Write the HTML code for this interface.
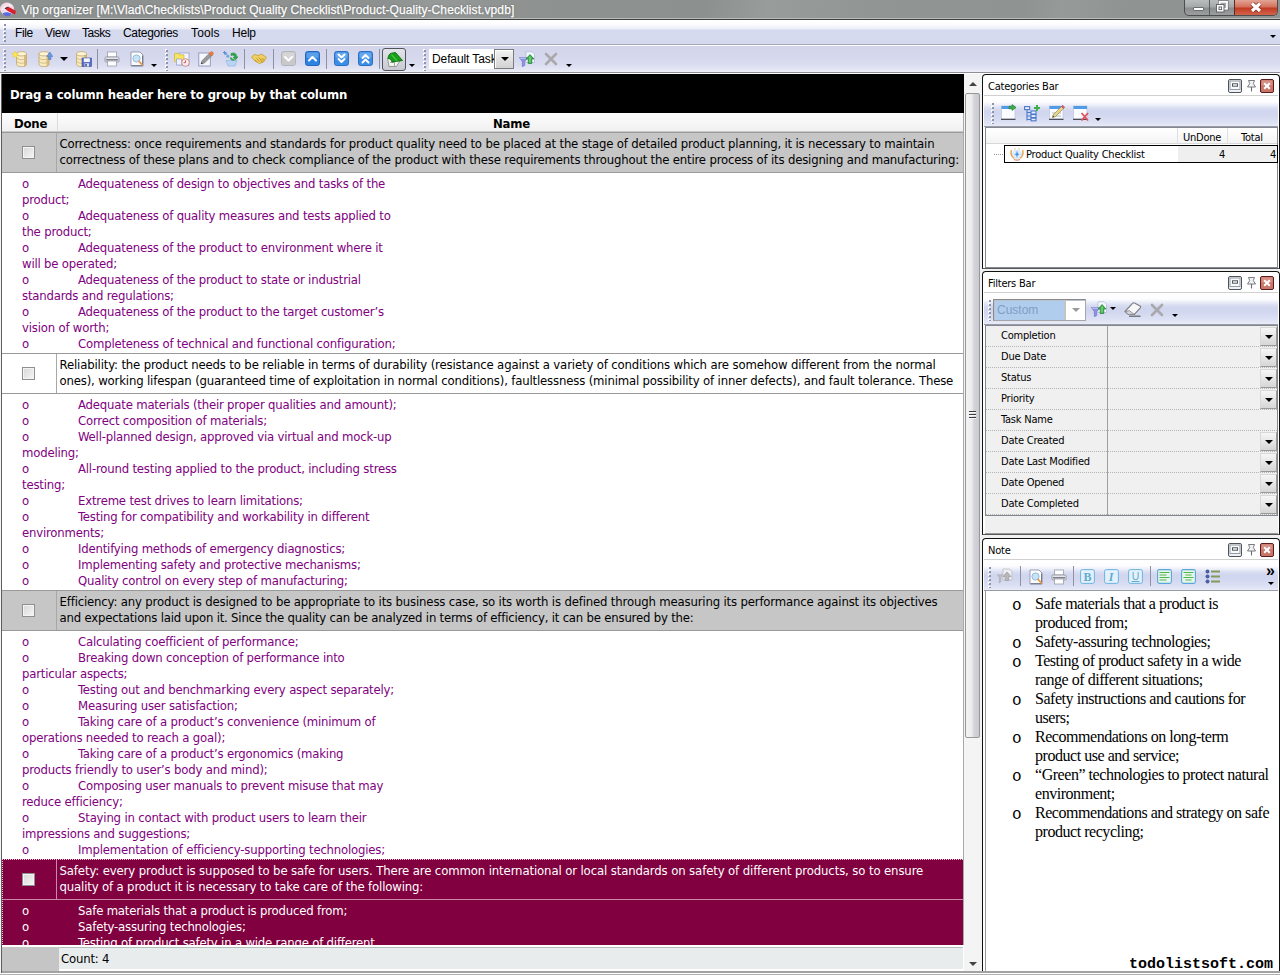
<!DOCTYPE html>
<html lang="en">
<head>
<meta charset="utf-8">
<title>Vip organizer</title>
<style>
*{box-sizing:border-box;margin:0;padding:0}
html,body{width:1280px;height:975px;overflow:hidden;background:#d6daee}
body{position:relative;font-family:"Liberation Sans",sans-serif;font-size:12px;color:#000}
.abs{position:absolute}
.t{position:absolute;white-space:pre;line-height:16px}
/* title bar */
#title{left:0;top:0;width:1280px;height:18px;background:linear-gradient(100deg,#8d9291 0%,#8d9291 30%,#969b9a 34%,#8e9392 40%,#8c9190 55%,#989d9c 60%,#919695 68%,#8f9493 80%,#969b9a 83%,#8f9493 88%)}
#title .t{left:21.500px;top:2px;-webkit-text-stroke:0.25px #fff;color:#fff;font-size:12px;line-height:16px;letter-spacing:0.09px;text-shadow:0 0 2px #555}
#tline{left:0;top:18px;width:1280px;height:2px;background:linear-gradient(#b8bcbb 0,#b8bcbb 1px,#3e4040 1px)}
/* menu */
#menu{left:0;top:20px;width:1280px;height:25px;background:linear-gradient(#ffffff 0,#fdfdff 4px,#f3f4fb 7px,#eaedf8 9px,#d5daee 10px,#d4d9ee 24px);border-bottom:1px solid #a3a7be}
#menu .t{top:5px;font-size:12px}
#tool{left:0;top:45px;width:1280px;height:29px;background:linear-gradient(#ffffff 0,#ffffff 1px,#d3d5ea 1px,#d5d8ed 12px,#dbdef1 20px,#e6e8f5 25px,#eef0f8 27px,#8e8e96 27px,#8e8e96 28px,#fff 28px)}
/* grid */
#grid{left:2px;top:74px;width:962px;height:899px;background:#fff;font-family:"DejaVu Sans Condensed","DejaVu Sans",sans-serif;font-size:13px;letter-spacing:-0.19px;overflow:hidden}
#grp{left:0;top:0;width:962px;height:39px;background:#000}
#grp .t{left:8px;top:13px;color:#fff;font-weight:bold;letter-spacing:-0.14px}
#hdr{left:0;top:39px;width:962px;height:19px;background:linear-gradient(#fdfdfd,#f1f1f1);border-bottom:1px solid #c9c9c9}
#hdr .t{top:3px;font-weight:bold}
.row{position:absolute;left:0;width:962px;height:41px;box-shadow:inset 0 1px 0 #9a9a9a,inset 0 -1px 0 #9a9a9a}
.row .c1{position:absolute;left:0;top:1px;width:55px;height:39px;border-right:1px solid #a8a8a8}
.row .t{left:57.500px;top:4px}
.cb{position:absolute;left:20px;top:13px;width:13px;height:13px;border:1px solid #8e8f8f;background:linear-gradient(135deg,#d8d8d8,#f6f6f6);box-shadow:inset 0 0 0 1px #f4f4f4}
.pv{position:absolute;left:0;width:962px;color:#800080}
.pv .t{left:20px;top:3px}
.pv i{font-style:normal;display:inline-block;width:56px}

/* scrollbar */
#sb{left:964px;top:74px;width:18px;height:898px;background:#f4f4f4}
#sbt{left:1px;top:19px;width:15px;height:645px;border:1px solid #979797;border-radius:2px;background:linear-gradient(90deg,#f3f3f3 0,#ececee 45%,#d4d4da 60%,#c9c9d1 100%)}
.arr{position:absolute;width:0;height:0;border-left:4px solid transparent;border-right:4px solid transparent}
/* panels */
.panel{border-bottom-color:#5a5a5a !important;position:absolute;left:982px;width:298px;font-family:"DejaVu Sans Condensed","DejaVu Sans",sans-serif;font-size:11px;letter-spacing:-0.22px;background:#fff;border:1px solid #111;border-radius:4px 4px 0 0;overflow:hidden}
.ph{position:absolute;left:1px;top:1px;right:1px;height:20px;border-bottom:1px solid #d0d0d0;background:#fff}
.ph .t{left:4px;top:3px}
.ptb{position:absolute;left:1px;right:1px;top:21px;height:31px;background:linear-gradient(#ffffff 0,#fdfdff 6px,#eceff9 9px,#d9def2 12px,#d1d6ef 15px,#d2d7f0 19px,#dee2f4 27px,#e8ebf7 calc(100% - 1px),#9a9ca8 calc(100% - 1px))}
.pbtn{position:absolute;top:4px;width:14px;height:14px}
.grip{position:absolute;width:3px;background:repeating-linear-gradient(transparent 0,transparent 1px,#9094aa 1px,#9094aa 3px,transparent 3px,transparent 4px) 1px 0/2px 100% no-repeat,repeating-linear-gradient(#fff 0,#fff 2px,transparent 2px,transparent 4px) 0 0/2px 100% no-repeat}
.sep{position:absolute;width:1px;background:#8d91a3}
.ic{position:absolute;width:16px;height:16px}
.dd{position:absolute;width:0;height:0;border-left:3px solid transparent;border-right:3px solid transparent;border-top:3px solid #000}

#fgrid .r{position:absolute;left:0;width:291px;height:21px;border-bottom:1px dotted #b5b5b5}
#fgrid .r .t{left:15px;top:2px}
#fgrid .r b{position:absolute;right:0;top:1px;width:17px;height:19px;border:1px solid #9a9a9a;border-top-color:#d8d8d8;border-left-color:#d8d8d8;background:linear-gradient(#f6f6f6,#d6d6d6)}
#fgrid .r b::after{content:"";position:absolute;left:4px;top:7px;border-left:4px solid transparent;border-right:4px solid transparent;border-top:4px solid #000}
#note{font-family:"Liberation Serif",serif;font-size:16px;letter-spacing:-0.46px}
#note .t{line-height:19px;left:49px;top:3px}
#note .o{position:absolute;left:26px;font-family:"Liberation Mono",monospace;font-size:16px;line-height:19px;letter-spacing:0}
#wm{left:1129px;top:956px;font-family:"Liberation Mono",monospace;font-weight:bold;font-size:15px;letter-spacing:0;line-height:18px}
</style>
</head>
<body>
<div id="title" class="abs"><span class="t">Vip organizer [M:\Vlad\Checklists\Product Quality Checklist\Product-Quality-Checklist.vpdb]</span></div>
<svg class="abs" style="left:0;top:1px" width="17" height="16" viewBox="0 0 17 16"><ellipse cx="7" cy="8" rx="7" ry="6.500" fill="#f3d9e4"/><path d="M1 9c2-4 5-6 9-6l3 2-8 4z" fill="#f8e9f0"/><path d="M5 7.500l3-2 8 4.500-1 3.500-6-2.500z" fill="#d8202c"/><path d="M4.500 7.500l2.500-1.800 1 .8-2.500 1.800z" fill="#3a3a48"/><path d="M2.500 12c3-1.500 6-1.500 9 .5l-2 2.500c-3 .8-5.500 0-7-3z" fill="#5a6ad8"/><path d="M3 11.500c2.500-1 5-1 7.500.2" stroke="#e8e8ff" stroke-width=".8" fill="none"/></svg><div class="abs" id="wb" style="left:1184px;top:0;width:94px;height:16px;border:1px solid #4a4e4e;border-top:0;border-radius:0 0 5px 5px;overflow:hidden;background:linear-gradient(#b9bdbd 0,#a4a8a8 7px,#8a8e8e 8px,#9a9e9e 15px)">
<div class="abs" style="left:49px;top:0;width:44px;height:15px;background:linear-gradient(#e2a595 0,#d4705c 7px,#c23a22 8px,#d2644c 15px);border-left:1px solid #5a2a24"></div>
<div class="abs" style="left:24px;top:0;width:1px;height:15px;background:#5a5e5e"></div>
<div class="abs" style="left:8px;top:7px;width:11px;height:4px;background:#fff;border:1px solid #6a6e6e;border-radius:1px"></div>
<svg class="abs" style="left:29px;top:0" width="16" height="14" viewBox="0 0 16 14"><rect x="5.500" y="1.800" width="7.500" height="7" fill="none" stroke="#5a5e5e" stroke-width="3"/><rect x="5.500" y="1.800" width="7.500" height="7" fill="#a6aaaa" stroke="#fff" stroke-width="1.800"/><rect x="2.500" y="4.500" width="7.500" height="7.500" fill="#fff" stroke="#5a5e5e" stroke-width=".9"/><rect x="5" y="7" width="2.600" height="2.600" fill="#fff" stroke="#5a5e5e" stroke-width=".9"/></svg>
<svg class="abs" style="left:64px;top:2px" width="14" height="11" viewBox="0 0 14 11"><path d="M3 1.500l8 7.500M11 1.500l-8 7.500" stroke="#7a2a20" stroke-width="4.600"/><path d="M3 1.500l8 7.500M11 1.500l-8 7.500" stroke="#fff" stroke-width="3.200"/></svg>
</div>
<div id="tline" class="abs"></div>
<div id="menu" class="abs">
<div class="grip" style="left:3px;top:3px;height:20px"></div><div class="dd" style="left:1270px;top:15px"></div>
<span class="t" style="left:15px;letter-spacing:-0.39px">File</span>
<span class="t" style="left:45px;letter-spacing:-0.3px">View</span>
<span class="t" style="left:82px;letter-spacing:-0.5px">Tasks</span>
<span class="t" style="left:123px;letter-spacing:-0.3px">Categories</span>
<span class="t" style="left:191px;letter-spacing:0.15px">Tools</span>
<span class="t" style="left:232px;letter-spacing:-0.23px">Help</span>
</div>
<div id="tool" class="abs">
<div class="grip" style="left:3px;top:4px;height:22px"></div>
<div class="grip" style="left:165px;top:4px;height:22px"></div>
<div class="grip" style="left:423px;top:4px;height:22px"></div>
<div class="sep" style="left:97px;top:4px;height:20px"></div>
<div class="sep" style="left:244px;top:4px;height:20px"></div>
<div class="sep" style="left:273px;top:4px;height:20px"></div>
<div class="sep" style="left:326px;top:4px;height:20px"></div>
<div class="sep" style="left:379px;top:4px;height:20px"></div>
<div class="dd" style="left:60px;top:12px;border-left-width:4px;border-right-width:4px;border-top-width:4px"></div>
<div class="dd" style="left:151px;top:19px"></div>
<div class="dd" style="left:409px;top:19px"></div>
<div class="dd" style="left:566px;top:19px"></div>
</div>
<div id="tbi"><svg class="ic" style="left:12px;top:51px;width:16px;height:16px" viewBox="0 0 16 16"><path d="M4.5 2.800v10.400c0 1.400 2.200 2.500 5 2.500s5-1.100 5-2.500v-10.400z" fill="#f7ebc4" stroke="#c4a566" stroke-width=".8"/><path d="M12.0 2.800v12.700c1.500-.3 2.500-1.100 2.500-2.300v-10.400z" fill="#cfae6a" opacity=".75"/><ellipse cx="9.5" cy="2.800" rx="5" ry="2.100" fill="#fcf5da" stroke="#c4a566" stroke-width=".8"/><path d="M4.5 6.200c0 1.400 2.200 2.500 5 2.500s5-1.100 5-2.500M4.5 9.700c0 1.400 2.200 2.500 5 2.500s5-1.100 5-2.500" fill="none" stroke="#cdb074" stroke-width=".8"/><path d="M3.200 0l1 2.300 2.400.300-1.800 1.600.500 2.400-2.100-1.200-2.100 1.200.500-2.400-1.800-1.600 2.400-.300z" fill="#ffe94d" stroke="#e8c020" stroke-width=".4"/></svg>
<svg class="ic" style="left:37px;top:51px;width:16px;height:16px" viewBox="0 0 16 16"><path d="M2 2.800v10.400c0 1.400 2.200 2.500 5 2.500s5-1.100 5-2.500v-10.400z" fill="#f7ebc4" stroke="#c4a566" stroke-width=".8"/><path d="M9.5 2.800v12.700c1.500-.3 2.500-1.100 2.500-2.300v-10.400z" fill="#cfae6a" opacity=".75"/><ellipse cx="7" cy="2.800" rx="5" ry="2.100" fill="#fcf5da" stroke="#c4a566" stroke-width=".8"/><path d="M2 6.200c0 1.400 2.200 2.500 5 2.500s5-1.100 5-2.500M2 9.700c0 1.400 2.200 2.500 5 2.500s5-1.100 5-2.500" fill="none" stroke="#cdb074" stroke-width=".8"/><path d="M12.800 1l3 4.500h-1.800v3h-2.400v-3h-1.800z" fill="#6a9be0" stroke="#3f6fbe" stroke-width=".5"/></svg>
<svg class="ic" style="left:76px;top:51px;width:16px;height:16px" viewBox="0 0 16 16"><path d="M0.5 2.800v10.400c0 1.400 2.200 2.500 5 2.500s5-1.100 5-2.500v-10.400z" fill="#f7ebc4" stroke="#c4a566" stroke-width=".8"/><path d="M8.0 2.800v12.700c1.500-.3 2.500-1.100 2.500-2.300v-10.400z" fill="#cfae6a" opacity=".75"/><ellipse cx="5.5" cy="2.800" rx="5" ry="2.100" fill="#fcf5da" stroke="#c4a566" stroke-width=".8"/><path d="M0.5 6.200c0 1.400 2.200 2.500 5 2.500s5-1.100 5-2.500M0.5 9.700c0 1.400 2.200 2.500 5 2.500s5-1.100 5-2.500" fill="none" stroke="#cdb074" stroke-width=".8"/><rect x="6" y="7" width="9.500" height="8.500" fill="#5b6fc4" stroke="#3b4a96" stroke-width=".6"/><rect x="7.800" y="7.300" width="6" height="3.700" fill="#f2f4ff"/><rect x="8.500" y="12.300" width="4.500" height="3.200" fill="#dfe3f7"/><rect x="9.300" y="12.900" width="1.500" height="2.500" fill="#3b4a96"/></svg>
<svg class="ic" style="left:104px;top:51px;width:16px;height:16px" viewBox="0 0 16 16"><rect x="3.500" y="1" width="9" height="5" fill="#fff" stroke="#9a9da8" stroke-width=".8"/><rect x="1" y="6" width="14" height="5" rx="1" fill="#e6e7ec" stroke="#8b8e99" stroke-width=".8"/><rect x="2" y="8" width="12" height="1.500" fill="#7d808a"/><rect x="3.500" y="10" width="9" height="5" fill="#fff" stroke="#9a9da8" stroke-width=".8"/></svg>
<svg class="ic" style="left:129px;top:51px;width:16px;height:16px" viewBox="0 0 16 16"><path d="M2 1h9l3 3v11h-12z" fill="#fdfdff" stroke="#8f96aa" stroke-width=".9"/><path d="M13.600 4.500v10.200h-11" fill="none" stroke="#5f6678" stroke-width=".9"/><circle cx="7.500" cy="7.500" r="3.600" fill="#c6e3f7" stroke="#8fb6d8" stroke-width=".9"/><path d="M10 10.300l3.300 3.500" stroke="#e89a4a" stroke-width="1.800" stroke-linecap="round"/></svg>
<svg class="ic" style="left:174px;top:51px;width:16px;height:16px" viewBox="0 0 16 16"><rect x="5" y="2" width="10" height="12" fill="#f4f6ff" stroke="#96a0c8" stroke-width=".8"/><path d="M.5 2.500h4l1 1.300h4.500v6.700h-9.500z" fill="#f7e463" stroke="#cdb43a" stroke-width=".7"/><rect x="2.500" y="8" width="5" height="6" fill="#eef1ff" stroke="#96a0c8" stroke-width=".7"/><circle cx="11.500" cy="11.500" r="3.800" fill="#fdeeee" stroke="#d28a92" stroke-width="1"/><path d="M11.500 9.300v2.400h-1.900" stroke="#b84a58" stroke-width=".9" fill="none"/></svg>
<svg class="ic" style="left:198px;top:51px;width:16px;height:16px" viewBox="0 0 16 16"><rect x=".8" y="2" width="11.500" height="13" fill="#f6f7ff" stroke="#8f96b6" stroke-width=".9"/><path d="M3 13l1-3.300 7.800-7.800 2.400 2.400-7.800 7.800z" fill="#9a9a9a" stroke="#6a6a6a" stroke-width=".6"/><path d="M11 2.700l1.600-1.600c.6-.6 1.400-.6 2 0l.3.300c.6.600.6 1.400 0 2l-1.600 1.600z" fill="#f07a38" stroke="#c85a20" stroke-width=".5"/><path d="M3 13l.6-1.800 1.200 1.200z" fill="#333"/></svg>
<svg class="ic" style="left:222px;top:51px;width:16px;height:16px" viewBox="0 0 16 16"><path d="M4 9.500h11l-2 5.500h-7z" fill="#b9d4f5" stroke="#8ab0e0" stroke-width=".6"/><circle cx="3.500" cy="2.500" r="1.600" fill="#6f9fe0"/><circle cx="5.800" cy="5.200" r="1.600" fill="#7aa8e6"/><path d="M1 1.500h3M2.500 0v3" stroke="#5f8fd8" stroke-width="1"/><path d="M9 2.500c3-1.500 6 0 5.500 3.500l1.500-.300-2.300 3-2.700-2.300 1.500-.200c.3-1.800-1.200-2.600-3.500-1.700z" fill="#2fa84a" stroke="#1c7c30" stroke-width=".5"/><path d="M8.500 6.500c.5 1.800 2 2.700 4 2.300" stroke="#2fa84a" stroke-width="1.600" fill="none"/></svg>
<svg class="ic" style="left:251px;top:51px;width:16px;height:16px" viewBox="0 0 16 16"><path d="M.5 6l3-2.500 4 1 3-1.500 5 3.500-2.500 3.500-2 1.500-2.500 1-2.500-1.500-2-1z" fill="#f0cf62" stroke="#c09a2c" stroke-width=".8"/><path d="M5.500 7.500l3 2.800M7.500 6.500l3 2.800M4 9l2.500 2.300" stroke="#b88e22" stroke-width=".8" fill="none"/><circle cx="11.500" cy="9.500" r="1.800" fill="#e2b944" stroke="#b88e22" stroke-width=".5"/></svg>
<svg class="ic" style="left:281px;top:51px;width:15px;height:15px" viewBox="0 0 15 15"><rect x=".5" y=".5" width="14" height="14" rx="2.200" fill="#c9c9cb" stroke="#b4b4b8"/><rect x="1.500" y="1.500" width="12" height="5.500" rx="1.500" fill="#fff" opacity=".22"/><path d="M4 6l3.500 3.500 3.500-3.500" fill="none" stroke="#fff" stroke-width="2" stroke-linecap="round" stroke-linejoin="round"/></svg>
<svg class="ic" style="left:305px;top:51px;width:15px;height:15px" viewBox="0 0 15 15"><rect x=".5" y=".5" width="14" height="14" rx="2.200" fill="#2f83e0" stroke="#2467bc"/><rect x="1.500" y="1.500" width="12" height="5.500" rx="1.500" fill="#fff" opacity=".22"/><path d="M4 9.500l3.500-3.500 3.500 3.500" fill="none" stroke="#fff" stroke-width="2" stroke-linecap="round" stroke-linejoin="round"/></svg>
<svg class="ic" style="left:334px;top:51px;width:15px;height:15px" viewBox="0 0 15 15"><rect x=".5" y=".5" width="14" height="14" rx="2.200" fill="#3b8de6" stroke="#2a6fc4"/><rect x="1.500" y="1.500" width="12" height="5.500" rx="1.500" fill="#fff" opacity=".22"/><path d="M4.500 3.500l3 3 3-3M4.500 8l3 3 3-3" fill="none" stroke="#fff" stroke-width="2" stroke-linecap="round" stroke-linejoin="round"/></svg>
<svg class="ic" style="left:358px;top:51px;width:15px;height:15px" viewBox="0 0 15 15"><rect x=".5" y=".5" width="14" height="14" rx="2.200" fill="#3b8de6" stroke="#2a6fc4"/><rect x="1.500" y="1.500" width="12" height="5.500" rx="1.500" fill="#fff" opacity=".22"/><path d="M4.500 7l3-3 3 3M4.500 11.500l3-3 3 3" fill="none" stroke="#fff" stroke-width="2" stroke-linecap="round" stroke-linejoin="round"/></svg>
<div class="abs" style="left:382px;top:48px;width:24px;height:23px;border:1px solid #50545c;border-radius:3px;background:linear-gradient(#e4e5ea,#c8c9d2)"></div><svg class="ic" style="left:386px;top:51px;width:17px;height:16px" viewBox="0 0 17 16"><path d="M1.500 7l1.500 8.500h7.500l3.500-6z" fill="#f2f6f0" stroke="#7d8a80" stroke-width=".8"/><path d="M4 11.500h4.500v3.500" fill="none" stroke="#8a968c" stroke-width=".8"/><path d="M2.200 7.500c0-3 1.200-4.800 3.300-5.300l4-.7 7 8-10.500 1.500c-1-2.500-2.200-3.500-3.800-3.500z" fill="#16a016" stroke="#0b6a10" stroke-width=".9"/><path d="M5.500 3.500l5.500 6.500" stroke="#4cc04c" stroke-width="1.200" fill="none"/></svg>
<div class="abs" style="left:429px;top:49px;width:66px;height:20px;background:#fff;overflow:hidden"><span class="t" style="left:3px;top:2px;font-size:12px;letter-spacing:-0.1px">Default Task</span></div><div class="abs" style="left:494px;top:49px;width:20px;height:20px;border:1px solid #7c7c7c;background:linear-gradient(#f2f2f2,#d2d2d2);box-shadow:inset 1px 1px 0 #fff"></div><div class="dd" style="left:501px;top:57px;border-left-width:4px;border-right-width:4px;border-top-width:4px"></div>
<svg class="ic" style="left:519px;top:51px;width:16px;height:16px" viewBox="0 0 16 16"><path d="M7 .800h6l2.500 2.500v8.200h-8.500z" fill="#f6f8ff" stroke="#a9b6d8" stroke-width=".7"/><path d="M.3 6.500h8.400l-3 4v4l-2.400 1.200v-5.200z" fill="#8c92e0" stroke="#6a70c8" stroke-width=".6"/><path d="M.8 6.800h7.400l-.8 1h-5.800z" fill="#c6caf4"/><path d="M11 3.500l4 4.500h-2.200v4.500h-3.600v-4.500h-2.200z" fill="#3cb04a" stroke="#1f8030" stroke-width=".7"/><path d="M11 5.500v6" stroke="#9be09f" stroke-width="1"/></svg>
<svg class="ic" style="left:544px;top:52px;width:14px;height:14px" viewBox="0 0 14 14"><path d="M2 2l10 10M12 2l-10 10" stroke="#a9a9ac" stroke-width="2.600" stroke-linecap="round"/></svg></div>

<div id="grid" class="abs">
<div id="grp" class="abs"><span class="t">Drag a column header here to group by that column</span></div>
<div id="hdr" class="abs"><div class="abs" style="left:55px;top:0;width:1px;height:18px;background:#dcdcdc"></div><span class="t" style="left:12px">Done</span><span class="t" style="left:491px">Name</span></div>

<div class="row" style="top:58px;background:#c6c6c6"><div class="c1"><div class="cb"></div></div>
<span class="t"><span style="letter-spacing:-0.178px">Correctness: once requirements and standards for product quality need to be placed at the stage of detailed product planning, it is necessary to maintain</span>
<span style="letter-spacing:-0.183px">correctness of these plans and to check compliance of the product with these requirements throughout the entire process of its designing and manufacturing:</span></span></div>
<div class="pv" style="top:99px;height:180px"><span class="t"><i>o</i>Adequateness of design to objectives and tasks of the
product;
<i>o</i>Adequateness of quality measures and tests applied to
the product;
<i>o</i>Adequateness of the product to environment where it
will be operated;
<i>o</i>Adequateness of the product to state or industrial
standards and regulations;
<i>o</i>Adequateness of the product to the target customer’s
vision of worth;
<i>o</i>Completeness of technical and functional configuration;</span></div>

<div class="row" style="top:279px;background:#fff"><div class="c1"><div class="cb"></div></div>
<span class="t"><span style="letter-spacing:-0.147px">Reliability: the product needs to be reliable in terms of durability (resistance against a variety of conditions which are somehow different from the normal</span>
<span style="letter-spacing:-0.163px">ones), working lifespan (guaranteed time of exploitation in normal conditions), faultlessness (minimal possibility of inner defects), and fault tolerance. These</span></span></div>
<div class="pv" style="top:320px;height:196px"><span class="t"><i>o</i>Adequate materials (their proper qualities and amount);
<i>o</i>Correct composition of materials;
<i>o</i>Well-planned design, approved via virtual and mock-up
modeling;
<i>o</i>All-round testing applied to the product, including stress
testing;
<i>o</i>Extreme test drives to learn limitations;
<i>o</i>Testing for compatibility and workability in different
environments;
<i>o</i>Identifying methods of emergency diagnostics;
<i>o</i>Implementing safety and protective mechanisms;
<i>o</i>Quality control on every step of manufacturing;</span></div>

<div class="row" style="top:516px;background:#c6c6c6"><div class="c1"><div class="cb"></div></div>
<span class="t"><span style="letter-spacing:-0.163px">Efficiency: any product is designed to be appropriate to its business case, so its worth is defined through measuring its performance against its objectives</span>
<span style="letter-spacing:-0.200px">and expectations laid upon it. Since the quality can be analyzed in terms of efficiency, it can be ensured by the:</span></span></div>
<div class="pv" style="top:557px;height:228px"><span class="t"><i>o</i>Calculating coefficient of performance;
<i>o</i>Breaking down conception of performance into
particular aspects;
<i>o</i>Testing out and benchmarking every aspect separately;
<i>o</i>Measuring user satisfaction;
<i>o</i>Taking care of a product’s convenience (minimum of
operations needed to reach a goal);
<i>o</i>Taking care of a product’s ergonomics (making
products friendly to user’s body and mind);
<i>o</i>Composing user manuals to prevent misuse that may
reduce efficiency;
<i>o</i>Staying in contact with product users to learn their
impressions and suggestions;
<i>o</i>Implementation of efficiency-supporting technologies;</span></div>

<div class="row" style="top:785px;background:#800040;color:#fff;box-shadow:inset 0 -1px 0 #c88aa6"><div class="abs" style="left:0;top:0;width:962px;height:1px;background:repeating-linear-gradient(90deg,#e8c8d8 0,#e8c8d8 1px,#800040 1px,#800040 2px)"></div><div class="abs" style="left:0;top:0;width:1px;height:86px;z-index:3;background:repeating-linear-gradient(#e8c8d8 0,#e8c8d8 1px,#800040 1px,#800040 2px)"></div><div class="c1" style="border-right-color:#c88aa6"><div class="cb"></div></div>
<span class="t"><span style="letter-spacing:-0.119px">Safety: every product is supposed to be safe for users. There are common international or local standards on safety of different products, so to ensure</span>
<span style="letter-spacing:-0.151px">quality of a product it is necessary to take care of the following:</span></span></div>
<div class="pv" style="top:826px;height:45px;background:#800040;color:#fff;overflow:hidden"><span class="t"><i>o</i>Safe materials that a product is produced from;
<i>o</i>Safety-assuring technologies;
<i>o</i>Testing of product safety in a wide range of different</span></div>

<div class="abs" style="left:961px;top:39px;width:1px;height:860px;background:#a9a9a9"></div>
<div class="abs" id="foot" style="left:0;top:871px;width:962px;height:28px;background:#fff"><div class="abs" style="left:0;top:2px;width:57px;height:25px;background:#c5c5c5"></div><div class="abs" style="left:57px;top:2px;width:904px;height:22px;background:#e8ecec;border-top:1px solid #b4bcbc"></div><div class="abs" style="left:0;top:26px;width:962px;height:2px;background:#a2a2a2"></div><span class="t" style="left:59px;top:6px">Count: 4</span></div>
</div>

<div class="abs" style="left:964px;top:74px;width:316px;height:901px;background:#f1f1f3"></div>
<div id="sb" class="abs">
<div class="arr" style="left:5px;top:8px;border-bottom:4px solid #444"></div>
<div id="sbt" class="abs"><div class="abs" style="left:3px;top:317px;width:7px;height:9px;background:repeating-linear-gradient(#3c3c3c 0,#3c3c3c 1px,#f8f8f8 1px,#f8f8f8 2px,transparent 2px,transparent 3px)"></div></div>
<div class="arr" style="left:5px;top:888px;border-top:4px solid #444"></div>
</div>

<!-- Categories Bar -->
<div class="panel" id="p1" style="top:74px;height:195px">
<div class="ph"><span class="t">Categories Bar</span></div><svg class="ic" style="left:245px;top:4px;width:14px;height:14px" viewBox="0 0 14 14"><rect x=".5" y=".5" width="13" height="13" rx="1.500" fill="#eef1f5" stroke="#4d545c"/><rect x="2" y="2" width="10" height="8.500" fill="#f8fafc" stroke="#7e868e" stroke-width=".8"/><rect x="4.500" y="4.800" width="5" height="2.400" fill="#fff" stroke="#4d545c" stroke-width="1"/></svg><svg class="ic" style="left:263px;top:5px;width:11px;height:12px" viewBox="0 0 11 12"><path d="M2.500 .500h6l-1.200 3 2.200 3.500h-8l2.200-3.500z" fill="#f2f2f4" stroke="#6a6e74" stroke-width=".9"/><path d="M5.500 7v4.500" stroke="#6a6e74" stroke-width="1.100"/></svg><svg class="ic" style="left:277px;top:4px;width:14px;height:14px" viewBox="0 0 14 14"><rect x=".5" y=".5" width="13" height="13" rx="1.500" fill="#c9766a" stroke="#5a1c1c"/><rect x="1.500" y="1.500" width="11" height="5" fill="#dc9a90" opacity=".7"/><path d="M4.200 4.200l5.600 5.600M9.800 4.200l-5.600 5.600" stroke="#fff" stroke-width="2"/></svg>
<div class="ptb"><div class="grip" style="left:7px;top:6px;height:22px"></div><svg class="ic" style="left:17px;top:9px;width:16px;height:16px;overflow:visible" viewBox="0 0 16 16"><rect x=".5" y="1" width="13.500" height="13" fill="#fbfcff" stroke="#c4c9dc" stroke-width=".8"/><rect x=".5" y="1" width="13.500" height="3" fill="#4f9be8"/><path d="M0 14.300h14.500" stroke="#4a4e5a" stroke-width="1.200"/><path d="M8 1.200h3v-1.700l4 3-4 3v-1.700h-3z" fill="#3fae4a" stroke="#1f7a2c" stroke-width=".6"/></svg><svg class="ic" style="left:40px;top:9px;width:17px;height:17px" viewBox="0 0 17 17"><path d="M3 4v11.500M3 7.500h4M3 11h4M3 14.500h4" stroke="#4a78c8" stroke-width="1.100" fill="none"/><rect x=".6" y="1.600" width="5" height="3" fill="#e8f0ff" stroke="#4a78c8" stroke-width="1.100"/><rect x="7" y="6" width="5" height="3" fill="#e8f0ff" stroke="#4a78c8" stroke-width="1.100"/><rect x="7" y="9.600" width="5" height="3" fill="#e8f0ff" stroke="#4a78c8" stroke-width="1.100"/><rect x="7" y="13.200" width="5" height="2.600" fill="#e8f0ff" stroke="#4a78c8" stroke-width="1.100"/><path d="M13 0v6M10 3h6" stroke="#3fae4a" stroke-width="2"/></svg><svg class="ic" style="left:65px;top:9px;width:16px;height:16px;overflow:visible" viewBox="0 0 16 16"><rect x=".5" y="1" width="13.500" height="13" fill="#fbfcff" stroke="#c4c9dc" stroke-width=".8"/><rect x=".5" y="1" width="13.500" height="3" fill="#4f9be8"/><path d="M0 14.300h14.500" stroke="#4a4e5a" stroke-width="1.200"/><path d="M3 8h9M3 11h9" stroke="#9aa" stroke-width=".8"/><path d="M3.500 12.500l1-3 8-8 2 2-8 8z" fill="#e8d48a" stroke="#8a7a3a" stroke-width=".6"/><path d="M12.500 1.500l1.200-1.200 2 2-1.200 1.200z" fill="#e0606a" stroke="#a83a44" stroke-width=".5"/><path d="M3.500 12.500l.5-1.700 1.200 1.200z" fill="#333"/></svg><svg class="ic" style="left:89px;top:9px;width:17px;height:17px" viewBox="0 0 17 17"><rect x=".5" y="1" width="13.500" height="13" fill="#fbfcff" stroke="#c4c9dc" stroke-width=".8"/><rect x=".5" y="1" width="13.500" height="3" fill="#4f9be8"/><path d="M0 14.300h14.500" stroke="#4a4e5a" stroke-width="1.200"/><path d="M8.500 8l6.500 7.500M15 8l-6.500 7.500" stroke="#e0505a" stroke-width="1.800"/></svg><div class="dd" style="left:111px;top:22px"></div></div>
<div class="abs" id="tree" style="left:2px;top:52px;width:293px;height:141px;border:1px solid #828790;background:#fff">
 <div class="abs" style="left:0;top:0;width:291px;height:16px;background:linear-gradient(#fff,#f4f4f4);border-bottom:1px solid #d8d8d8"></div>
 <div class="abs" style="left:191px;top:0;width:1px;height:16px;background:#e0e0e0"></div>
 <div class="abs" style="left:241px;top:0;width:1px;height:16px;background:#e0e0e0"></div>
 <span class="t" style="left:197px;top:2px">UnDone</span>
 <span class="t" style="left:255px;top:2px">Total</span>
 <div class="abs" style="left:192px;top:18px;width:99px;height:17px;background:#efefef"></div>
 <div class="abs" style="left:8px;top:26px;width:10px;height:1px;background:repeating-linear-gradient(90deg,#999 0,#999 1px,transparent 1px,transparent 2px)"></div>
 <div class="abs" style="left:18px;top:17px;width:274px;height:18px;border:1px solid #000"></div>
 <svg class="ic" style="left:23px;top:18px;width:16px;height:16px" viewBox="0 0 16 16"><ellipse cx="8" cy="8.500" rx="5.200" ry="5" fill="#d9edfb"/><path d="M2.500 4c-1 3 0 6.500 2.500 8.500M13.500 4c1 3 0 6.500-2.500 8.500" stroke="#e9a55a" stroke-width="1.500" fill="none"/><path d="M5 13.500c2 .8 4 .8 6 0" stroke="#d8896a" stroke-width="1.200" fill="none"/><path d="M5.500 3.500l.8-1.200M10.500 3.500l-.8-1.200" stroke="#e9a55a" stroke-width="1"/><path d="M8 4.500l.8 3 2 .8-2 .8-.8 3-.8-3-2-.8 2-.8z" fill="#4a90e0"/></svg><span class="t" style="left:40px;top:19px">Product Quality Checklist</span>
 <span class="t" style="left:233px;top:19px">4</span>
 <span class="t" style="left:284px;top:19px">4</span>
</div>
</div>

<!-- Filters Bar -->
<div class="panel" id="p2" style="top:271px;height:264px">
<div class="ph"><span class="t">Filters Bar</span></div><!--F--><svg class="ic" style="left:245px;top:4px;width:14px;height:14px" viewBox="0 0 14 14"><rect x=".5" y=".5" width="13" height="13" rx="1.500" fill="#eef1f5" stroke="#4d545c"/><rect x="2" y="2" width="10" height="8.500" fill="#f8fafc" stroke="#7e868e" stroke-width=".8"/><rect x="4.500" y="4.800" width="5" height="2.400" fill="#fff" stroke="#4d545c" stroke-width="1"/></svg><svg class="ic" style="left:263px;top:5px;width:11px;height:12px" viewBox="0 0 11 12"><path d="M2.500 .500h6l-1.200 3 2.200 3.500h-8l2.200-3.500z" fill="#f2f2f4" stroke="#6a6e74" stroke-width=".9"/><path d="M5.500 7v4.500" stroke="#6a6e74" stroke-width="1.100"/></svg><svg class="ic" style="left:277px;top:4px;width:14px;height:14px" viewBox="0 0 14 14"><rect x=".5" y=".5" width="13" height="13" rx="1.500" fill="#c9766a" stroke="#5a1c1c"/><rect x="1.500" y="1.500" width="11" height="5" fill="#dc9a90" opacity=".7"/><path d="M4.200 4.200l5.600 5.600M9.800 4.200l-5.600 5.600" stroke="#fff" stroke-width="2"/></svg>
<div class="ptb" style="height:32px"><div class="grip" style="left:4px;top:6px;height:22px"></div><div class="abs" style="left:9px;top:6px;width:93px;height:22px;border:1px solid #8a8a8a;border-bottom-color:#a6a6a6;border-right-color:#a6a6a6;background:#fff;box-shadow:inset 1px 1px 0 #b9c3cf"><div class="abs" style="left:1px;top:1px;width:69px;height:19px;background:#b0cdee"></div><span class="t" style="left:3px;top:2px;font-family:'Liberation Sans',sans-serif;font-size:12px;letter-spacing:0;color:#7f9fc4">Custom</span><div class="abs" style="left:70px;top:0;width:2px;height:20px;background:#c4c4c4"></div><div class="dd" style="left:78px;top:8px;border-top-color:#9a9a9a;border-left-width:4px;border-right-width:4px;border-top-width:4px"></div></div><svg class="ic" style="left:107px;top:8px;width:16px;height:16px" viewBox="0 0 16 16"><path d="M7 .800h6l2.500 2.500v8.200h-8.500z" fill="#f6f8ff" stroke="#a9b6d8" stroke-width=".7"/><path d="M.3 6.500h8.400l-3 4v4l-2.400 1.200v-5.200z" fill="#8c92e0" stroke="#6a70c8" stroke-width=".6"/><path d="M.8 6.800h7.400l-.8 1h-5.800z" fill="#c6caf4"/><path d="M11 3.500l4 4.500h-2.200v4.500h-3.600v-4.500h-2.200z" fill="#3cb04a" stroke="#1f8030" stroke-width=".7"/><path d="M11 5.500v6" stroke="#9be09f" stroke-width="1"/></svg><div class="dd" style="left:126px;top:14px"></div><svg class="ic" style="left:140px;top:9px;width:18px;height:15px" viewBox="0 0 18 15"><path d="M1 9.500l7.500-8.200c.6-.6 1.300-.7 2-.3l5.500 3c.7.400.8 1.200.3 1.800l-6 6.700h-5.800z" fill="#f7f7f9" stroke="#808086" stroke-width="1.200"/><path d="M1.200 9.800l3.300 2.600h5.600l-4.700-3.800z" fill="#d6d6dc" stroke="#808086" stroke-width=".8"/><path d="M5 14.200h11.500" stroke="#77777d" stroke-width="1.400"/></svg><svg class="ic" style="left:166px;top:10px;width:14px;height:14px" viewBox="0 0 14 14"><path d="M2 2l10 10M12 2l-10 10" stroke="#a9a9ac" stroke-width="2.600" stroke-linecap="round"/></svg><div class="dd" style="left:188px;top:21px"></div></div>
<div class="abs" id="fgrid" style="left:2px;top:53px;width:293px;height:191px;border:1px solid #828790;background:#f0f0f0">
<div class="r" style="top:0px"><span class="t">Completion</span><b></b></div>
<div class="r" style="top:21px"><span class="t">Due Date</span><b></b></div>
<div class="r" style="top:42px"><span class="t">Status</span><b></b></div>
<div class="r" style="top:63px"><span class="t">Priority</span><b></b></div>
<div class="r" style="top:84px"><span class="t">Task Name</span></div>
<div class="r" style="top:105px"><span class="t">Date Created</span><b></b></div>
<div class="r" style="top:126px"><span class="t">Date Last Modified</span><b></b></div>
<div class="r" style="top:147px"><span class="t">Date Opened</span><b></b></div>
<div class="r" style="top:168px"><span class="t">Date Completed</span><b></b></div>
<div class="abs" style="left:121px;top:0;width:1px;height:189px;background:#a0a0a0"></div></div>
<div class="abs" style="left:2px;top:244px;width:293px;height:18px;background:#f0f0f0;border-bottom:1px solid #999"></div>
</div>

<!-- Note -->
<div class="panel" id="p3" style="top:538px;height:437px">
<div class="ph"><span class="t">Note</span></div><svg class="ic" style="left:245px;top:4px;width:14px;height:14px" viewBox="0 0 14 14"><rect x=".5" y=".5" width="13" height="13" rx="1.500" fill="#eef1f5" stroke="#4d545c"/><rect x="2" y="2" width="10" height="8.500" fill="#f8fafc" stroke="#7e868e" stroke-width=".8"/><rect x="4.500" y="4.800" width="5" height="2.400" fill="#fff" stroke="#4d545c" stroke-width="1"/></svg><svg class="ic" style="left:263px;top:5px;width:11px;height:12px" viewBox="0 0 11 12"><path d="M2.500 .500h6l-1.200 3 2.200 3.500h-8l2.200-3.500z" fill="#f2f2f4" stroke="#6a6e74" stroke-width=".9"/><path d="M5.500 7v4.500" stroke="#6a6e74" stroke-width="1.100"/></svg><svg class="ic" style="left:277px;top:4px;width:14px;height:14px" viewBox="0 0 14 14"><rect x=".5" y=".5" width="13" height="13" rx="1.500" fill="#c9766a" stroke="#5a1c1c"/><rect x="1.500" y="1.500" width="11" height="5" fill="#dc9a90" opacity=".7"/><path d="M4.200 4.200l5.600 5.600M9.800 4.200l-5.600 5.600" stroke="#fff" stroke-width="2"/></svg>
<div class="ptb"><div class="grip" style="left:4px;top:6px;height:22px"></div><svg class="ic" style="left:13px;top:8px;width:16px;height:16px" viewBox="0 0 16 16"><path d="M.5 6.500c1 .6 4 .6 5 0l-1.800 3v4.500l-1.400 1v-5.500z" fill="#c4c4c8" stroke="#a4a4aa" stroke-width=".6"/><path d="M6 1h6.500l2.500 2.500v8.500h-9z" fill="#eeeef2" stroke="#b4b4bc" stroke-width=".7"/><path d="M10 4l4 4.500h-2.200v4h-3.600v-4h-2.200z" fill="#b8b8bc" stroke="#9a9aa0" stroke-width=".7"/></svg><div class="sep" style="left:36px;top:6px;height:20px"></div><svg class="ic" style="left:44px;top:9px;width:16px;height:16px" viewBox="0 0 16 16"><path d="M2 1h9l3 3v11h-12z" fill="#fdfdff" stroke="#8f96aa" stroke-width=".9"/><path d="M13.600 4.500v10.200h-11" fill="none" stroke="#5f6678" stroke-width=".9"/><circle cx="7.500" cy="7.500" r="3.600" fill="#c6e3f7" stroke="#8fb6d8" stroke-width=".9"/><path d="M10 10.300l3.300 3.500" stroke="#e89a4a" stroke-width="1.800" stroke-linecap="round"/></svg><svg class="ic" style="left:67px;top:9px;width:16px;height:16px" viewBox="0 0 16 16"><rect x="3.500" y="1" width="9" height="5" fill="#fff" stroke="#9a9da8" stroke-width=".8"/><rect x="1" y="6" width="14" height="5" rx="1" fill="#e6e7ec" stroke="#8b8e99" stroke-width=".8"/><rect x="2" y="8" width="12" height="1.500" fill="#7d808a"/><rect x="3.500" y="10" width="9" height="5" fill="#fff" stroke="#9a9da8" stroke-width=".8"/></svg><div class="sep" style="left:89px;top:6px;height:20px"></div><svg class="ic" style="left:96px;top:9px;width:15px;height:15px" viewBox="0 0 15 15"><rect x=".6" y=".6" width="13.800" height="13.800" rx="1.800" fill="#e2f1fb" stroke="#6db2e2" stroke-width="1"/><text x="7.500" y="12" text-anchor="middle" font-family="Liberation Serif,serif" font-weight="bold" font-size="12" fill="#63aad2">B</text></svg><svg class="ic" style="left:120px;top:9px;width:15px;height:15px" viewBox="0 0 15 15"><rect x=".6" y=".6" width="13.800" height="13.800" rx="1.800" fill="#e2f1fb" stroke="#6db2e2" stroke-width="1"/><text x="7" y="12" text-anchor="middle" font-family="Liberation Serif,serif" font-style="italic" font-weight="bold" font-size="12" fill="#63aad2">I</text></svg><svg class="ic" style="left:144px;top:9px;width:15px;height:15px" viewBox="0 0 15 15"><rect x=".6" y=".6" width="13.800" height="13.800" rx="1.800" fill="#e2f1fb" stroke="#6db2e2" stroke-width="1"/><text x="7.500" y="11" text-anchor="middle" font-family="Liberation Sans,sans-serif" font-size="10.500" fill="#63aad2">U</text><path d="M3.500 12.500h8" stroke="#63aad2" stroke-width="1"/></svg><div class="sep" style="left:166px;top:6px;height:20px"></div><svg class="ic" style="left:173px;top:9px;width:15px;height:15px" viewBox="0 0 15 15"><rect x=".6" y=".6" width="13.800" height="13.800" rx="1.800" fill="#e6f6ea" stroke="#5aa6dc" stroke-width="1.100"/><path d="M2.500 3.500h10M2.500 6h7M2.500 8.500h10M2.500 11h7" stroke="#52b652" stroke-width="1.200"/></svg><svg class="ic" style="left:197px;top:9px;width:15px;height:15px" viewBox="0 0 15 15"><rect x=".6" y=".6" width="13.800" height="13.800" rx="1.800" fill="#e6f6ea" stroke="#5aa6dc" stroke-width="1.100"/><path d="M2.500 3.500h10M4.500 6h6M2.500 8.500h10M4.500 11h6" stroke="#52b652" stroke-width="1.200"/></svg><svg class="ic" style="left:221px;top:9px;width:15px;height:15px" viewBox="0 0 15 15"><circle cx="2.500" cy="2.500" r="2" fill="#4a5ea8"/><circle cx="2.500" cy="7.500" r="2" fill="#4a5ea8"/><circle cx="2.500" cy="12.500" r="2" fill="#4a5ea8"/><path d="M6 2.500h9M6 7.500h9M6 12.500h9" stroke="#829a5a" stroke-width="2.200"/></svg><span class="t" style="left:282px;top:3px;font-family:'Liberation Sans',sans-serif;font-size:16px;font-weight:bold;letter-spacing:0">»</span><div class="dd" style="left:284px;top:22px"></div></div>
<div class="abs" id="note" style="left:2px;top:52px;width:295px;height:384px;background:#fff;border-left:1px solid #999"><span class="t">Safe materials that a product is
produced from;
Safety-assuring technologies;
Testing of product safety in a wide
range of different situations;
Safety instructions and cautions for
users;
Recommendations on long-term
product use and service;
“Green” technologies to protect natural
environment;
Recommendations and strategy on safe
product recycling;</span><span class="o" style="top:6px">o</span><span class="o" style="top:44px">o</span><span class="o" style="top:63px">o</span><span class="o" style="top:101px">o</span><span class="o" style="top:139px">o</span><span class="o" style="top:177px">o</span><span class="o" style="top:215px">o</span></div>
</div>
<div class="abs" style="left:964px;top:971px;width:316px;height:2px;background:#a2a2a2;z-index:5"></div><div class="abs" style="z-index:5;left:0;top:973px;width:1280px;height:2px;background:linear-gradient(#fff 0,#fff 1px,#b0b0b0 1px)"></div>
<div class="abs" style="left:1px;top:74px;width:1px;height:899px;background:#5e5e5e"></div><div class="abs" style="left:0;top:74px;width:1px;height:901px;background:#f4f4f4"></div>
<span id="wm" class="t">todolistsoft.com</span>
</body>
</html>
